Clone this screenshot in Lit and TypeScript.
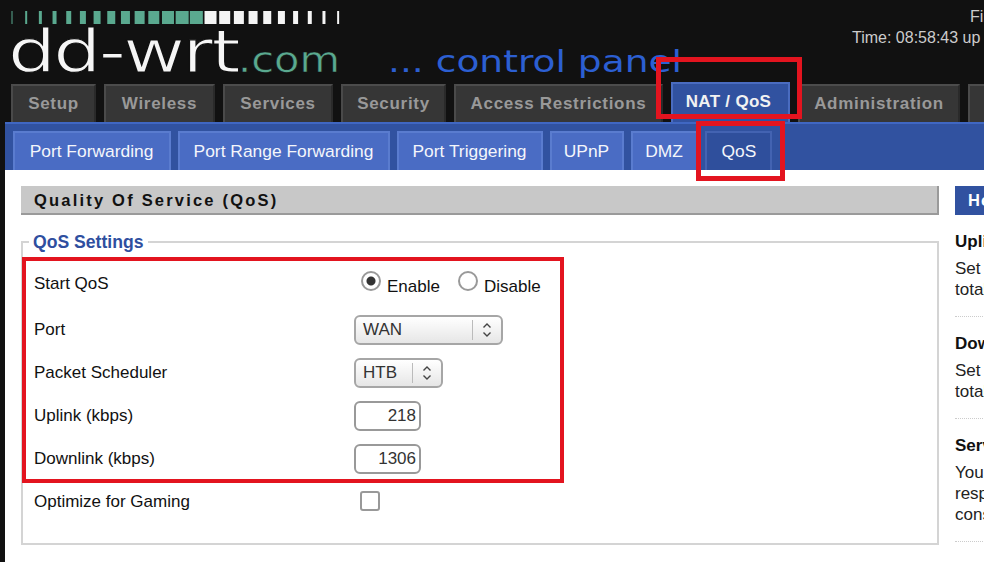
import { LitElement, html, css, svg } from "lit";
import { customElement } from "lit/decorators.js";

const barWidths = [1, 2, 3, 4, 5, 6, 7, 8, 9, 10, 11, 12, 13, 13, 12, 11, 10, 9, 8, 7, 5, 4, 3, 2];

const chevrons = html`<svg class="chev" width="12" height="18" viewBox="0 0 12 18" fill="none" stroke="#444" stroke-width="1.4"><path d="M2.5 6.5 6 3l3.500 3.500M2.500 11.500 6 15l3.500-3.500"/></svg>`;

@customElement("app-root")
export class AppRoot extends LitElement {
  static styles = css`
    :host { display: block; width: 984px; height: 562px; overflow: hidden; position: relative; background: #111; font-family: "Liberation Sans", Arial, sans-serif; font-size: 17px; color: #111; }
    .header { display: flex; height: 84px; }
    .logo { flex: 0 0 852px; height: 84px; display: block; }
    .info { flex: none; white-space: nowrap; color: #ccc; font-size: 16px; line-height: 21px; padding-top: 6px; }
    .info div:first-child { margin-left: 118px; }

    .tabs { display: flex; height: 38px; padding-left: 11px; gap: 8px; align-items: flex-end; }
    .tab { flex: none; height: 38px; box-sizing: border-box; background: #363636; border-top: 2px solid #4c4c4c; border-left: 2px solid #4a4a4a; border-right: 2px solid #2a2a2a; color: #999; font-weight: bold; font-size: 17px; letter-spacing: .7px; display: flex; align-items: center; justify-content: center; }
    .tab.on { height: 40px; background: #3152a0; border-color: #4a6cc0; border-bottom: none; color: #f2f2f2; padding: 0 4px 3px 0; letter-spacing: .3px; }

    .sub { margin-left: 5px; height: 48px; box-sizing: border-box; background: #3152a0; border-top: 2px solid #4067c2; padding-top: 7px; padding-left: 8px; display: flex; gap: 7px; }
    .st { flex: none; height: 39px; box-sizing: border-box; background: #4a6cc4; border: 2px solid #5a7ccf; border-bottom: none; color: #f4f6fb; font-size: 17.4px; display: flex; align-items: center; justify-content: center; padding-right: 1px; }
    .st.on { background: #2f4f9c; border-color: #4363b2; padding: 0 0 0 1px; }

    .page { margin-left: 5px; height: 392px; background: #fff; display: flex; padding: 16px 0 0 16px; gap: 16px; box-sizing: border-box; }
    .main { flex: 0 0 918px; }
    .title { height: 29px; box-sizing: border-box; background: #c8c8c8; border-right: 2px solid #9a9a9a; border-bottom: 2px solid #9a9a9a; font-weight: bold; font-size: 16.5px; letter-spacing: 2.2px; padding-left: 13px; line-height: 29px; color: #111; }
    fieldset { margin: 16px 0 0; height: 314px; box-sizing: border-box; border: 2px solid #d4d4d4; padding: 0 0 0 11px; }
    legend { margin-left: -5px; padding: 0 5px 0 4px; font-weight: bold; font-size: 17.6px; color: #2f4f9f; line-height: 22px; }
    .rows { display: flex; flex-direction: column; gap: 13px; margin-top: 16px; }
    .row { display: flex; align-items: center; height: 30px; }
    .row.first { margin-bottom: 3px; }
    .lbl { flex: 0 0 320px; }
    .radios { display: flex; align-items: flex-start; margin-left: 7px; }
    .radio { appearance: none; margin: -1px 6px 0 0; width: 20px; height: 20px; border: 2px solid #999; border-radius: 50%; box-sizing: border-box; background: #fff; flex: none; }
    .radio:checked { background: radial-gradient(circle, #333 0 4px, #fff 5px); }
    .rt { margin: 5px 18px 0 0; }
    .rt:last-child { margin-right: 0; }
    .sel { box-sizing: border-box; height: 30px; border: 2px solid #a6a6a6; border-radius: 6px; background: linear-gradient(#fff, #e6e6e6); display: flex; align-items: center; color: #333; padding-left: 7px; }
    .sel span { flex: 1; }
    .sel .div { flex: none; width: 1px; height: 20px; background: #bbb; margin-right: 8px; }
    .chev { flex: none; margin-right: 8px; }
    .wan { width: 149px; }
    .htb { width: 89px; }
    .num { box-sizing: border-box; width: 67px; height: 30px; border: 2px solid #999; border-radius: 6px; background: #fff; text-align: right; padding: 0 3px 0 0; font: inherit; color: #333; outline: none; }
    .check { appearance: none; margin: -3px 0 0 6px; width: 20px; height: 20px; box-sizing: border-box; border: 2px solid #999; border-radius: 3px; background: #fff; }

    .side { flex: none; width: 240px; line-height: 21px; }
    .side h2 { margin: 0; height: 29px; background: #3152a0; color: #fff; font-size: 16.5px; line-height: 29px; padding-left: 13px; letter-spacing: 1px; }
    .side h3 { margin: 16px 0 5px; font-size: 17px; line-height: 22px; color: #111; }
    .side p { margin: 0; color: #222; white-space: nowrap; }
    .side hr { border: none; border-top: 1px dotted #ccc; margin: 16px 0 0; }

    .mark { position: absolute; box-sizing: border-box; border: 5px solid #e3141f; pointer-events: none; }
    .m1 { left: 656px; top: 57px; width: 146px; height: 62px; }
    .m2 { left: 696px; top: 121px; width: 89px; height: 60px; }
    .m3 { left: 22px; top: 257px; width: 542px; height: 226px; border-width: 4px; }
  `;

  render() {
    const tabs = [["Setup", 85], ["Wireless", 111], ["Services", 110], ["Security", 105], ["Access Restrictions", 209], ["NAT / QoS", 119], ["Administration", 162], ["Status", 100]];
    const subs = [["Port Forwarding", 158], ["Port Range Forwarding", 212], ["Port Triggering", 146], ["UPnP", 74], ["DMZ", 67], ["QoS", 67]];
    return html`
      <div class="header">
        <svg class="logo" viewBox="0 0 852 84" aria-label="dd-wrt.com control panel">
          ${barWidths.map((w, i) => svg`<rect x=${11 + i * 14.18 + (6 - w / 2) - 5} y="11" width=${w} height="13" fill=${i < 14 ? "#5aa98f" : "#f4f4f4"} />`)}
          <text x="8" y="72" textLength="230" lengthAdjust="spacingAndGlyphs" font-family="'DejaVu Sans', sans-serif" font-size="59" letter-spacing="-2" fill="#f6f6f6" stroke="#111" stroke-width="1.2">dd-wrt</text>
          <text x="238" y="72" textLength="102" lengthAdjust="spacingAndGlyphs" font-family="'DejaVu Sans', sans-serif" font-size="36" fill="#5aa98f" stroke="#111" stroke-width=".5">.com</text>
          <text x="388" y="72" textLength="294" lengthAdjust="spacingAndGlyphs" font-family="'DejaVu Sans', sans-serif" font-size="31" fill="#2c5fd2">... control panel</text>
        </svg>
        <div class="info">
          <div>Firmware: DD-WRT v24-sp2</div>
          <div>Time: 08:58:43 up 1 day</div>
        </div>
      </div>
      <div class="tabs">
        ${tabs.map(([t, w]) => html`<div class="tab ${t === "NAT / QoS" ? "on" : ""}" style="width:${w}px">${t}</div>`)}
      </div>
      <div class="sub">
        ${subs.map(([t, w]) => html`<div class="st ${t === "QoS" ? "on" : ""}" style="width:${w}px">${t}</div>`)}
      </div>
      <div class="page">
        <div class="main">
          <div class="title">Quality Of Service (QoS)</div>
          <fieldset>
            <legend>QoS Settings</legend>
            <div class="rows">
              <div class="row first"><div class="lbl">Start QoS</div>
                <div class="radios">
                  <input class="radio" type="radio" name="q" checked /><span class="rt">Enable</span>
                  <input class="radio" type="radio" name="q" /><span class="rt">Disable</span>
                </div>
              </div>
              <div class="row"><div class="lbl">Port</div><div class="sel wan"><span>WAN</span><i class="div"></i>${chevrons}</div></div>
              <div class="row"><div class="lbl">Packet Scheduler</div><div class="sel htb"><span>HTB</span><i class="div"></i>${chevrons}</div></div>
              <div class="row"><div class="lbl">Uplink (kbps)</div><input class="num" value="218" /></div>
              <div class="row"><div class="lbl">Downlink (kbps)</div><input class="num" value="1306" /></div>
              <div class="row"><div class="lbl">Optimize for Gaming</div><input class="check" type="checkbox" /></div>
            </div>
          </fieldset>
        </div>
        <div class="side">
          <h2>Help</h2>
          <h3>Uplink</h3>
          <p>Set this to 80%-95% of your</p><p>total upload limit.</p>
          <hr />
          <h3>Downlink</h3>
          <p>Set this to 80%-100% of your</p><p>total download limit.</p>
          <hr />
          <h3>Services Priority</h3>
          <p>You may control your data rate</p><p>respect to the application that is</p><p>consuming bandwidth.</p>
          <hr />
          <h3>Help</h3>
        </div>
      </div>
      <div class="mark m1"></div>
      <div class="mark m2"></div>
      <div class="mark m3"></div>
    `;
  }
}
